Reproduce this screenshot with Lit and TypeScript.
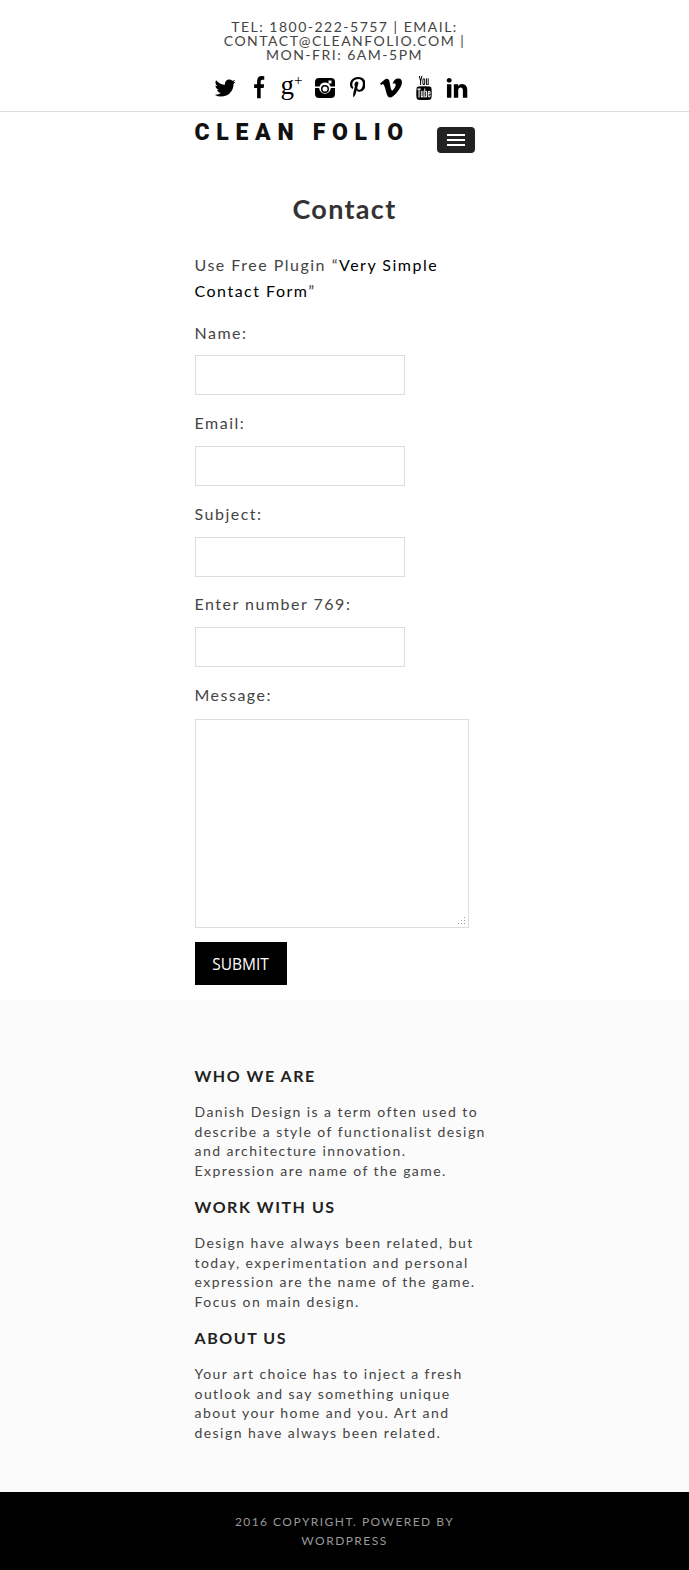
import { LitElement, html, css, svg } from 'lit';
import { customElement } from 'lit/decorators.js';

const twitter = { w: 1664, h: 1792, d: 'M1620 408q-67 98-162 167 1 14 1 42 0 130-38 259.5t-115.5 248.5-184.5 210.5-258 146-323 54.5q-271 0-496-145 35 4 78 4 225 0 401-138-105-2-188-64.5t-114-159.5q33 5 61 5 43 0 85-11-112-23-185.5-111.5t-73.5-205.5v-4q68 38 146 41-66-44-105-115t-39-154q0-88 44-163 121 149 294.5 238.5t371.5 99.5q-8-38-8-74 0-134 94.5-228.5t228.5-94.5q140 0 236 102 109-21 205-78-37 115-142 178 100-11 200-54z' };
const facebook = { w: 1024, h: 1792, d: 'M959 12v264h-157q-86 0-116 36t-30 108v189h293l-39 296h-254v759h-306v-759h-255v-296h255v-218q0-186 104-288.5t277-102.5q147 0 228 12z' };
const pinterest = { w: 1280, h: 1792, d: 'M0 597q0-108 37.5-203.5t103.5-166.5 152-123 185-78 202-26q158 0 294 66.5t221 193.5 85 287q0 96-19 188t-60 177-100 149.5-145 103-189 38.5q-68 0-135-32t-96-88q-10 39-28 112.5t-23.5 95-20.5 71-26 71-32 62.5-46 77.5-62 86.5l-14 5-9-10q-15-157-15-188 0-92 21.5-206.5t66.5-287.5 52-203q-32-65-32-169 0-83 52-156t132-73q61 0 95 40.5t34 102.5q0 66-44 191t-44 187q0 63 45 104.5t109 41.5q55 0 102-25t78.5-68 56-95 38-110.5 20-111 6.5-99.5q0-173-109.5-269.5t-285.5-96.5q-200 0-334 129.5t-134 328.5q0 44 12.5 85t27 65 27 45.5 12.5 30.5q0 28-15 73t-37 45q-2 0-17-3-51-15-90.5-56t-61-94.5-32.5-108-11-106.5z' };
const vimeo = { w: 1792, h: 1792, d: 'M1709 518q-10 236-332 651-333 431-562 431-142 0-240-263-44-160-132-482-72-262-157-262-18 0-127 76l-77-98q24-21 108-96.5t130-115.5q156-138 241-146 95-9 153 55.5t81 203.5q44 287 66 373 55 249 120 249 51 0 154-161 101-161 109-246 13-139-109-139-57 0-121 26 120-393 459-382 251 8 236 326z' };
const youtube = { w: 1536, h: 1792, d: 'M971 1244v211q0 67-39 67-23 0-45-22v-301q22-22 45-22 39 0 39 67zm338 1v46h-90v-46q0-68 45-68t45 68zm-966-218h107v-94h-312v94h105v569h100v-569zm288 569h89v-494h-89v378q-30 42-57 42-18 0-21-21-1-3-1-35v-364h-89v391q0 49 8 73 12 37 58 37 48 0 102-61v54zm429-148v-197q0-73-9-99-17-56-71-56-50 0-93 54v-217h-89v663h89v-48q45 55 93 55 54 0 71-55 9-27 9-100zm338-10v-13h-91q0 51-2 61-7 36-40 36-46 0-46-69v-87h179v-103q0-79-27-116-39-51-106-51-68 0-107 51-28 37-28 116v173q0 79 29 116 39 51 108 51 72 0 108-53 18-27 21-54 2-9 2-58zm-608-913v-210q0-69-43-69t-43 69v210q0 70 43 70t43-70zm719 751q0 234-26 350-14 59-58 99t-102 46q-184 21-555 21t-555-21q-58-6-102.5-46t-57.5-99q-26-112-26-350 0-234 26-350 14-59 58-99t103-47q183-20 554-20t555 20q58 7 102.5 47t57.5 99q26 112 26 350zm-998-1276h102l-121 399v271h-100v-271q-14-74-61-212-37-103-65-187h106l71 263zm370 333v175q0 81-28 118-38 51-106 51-67 0-105-51-28-38-28-118v-175q0-80 28-117 38-51 105-51 68 0 106 51 28 37 28 117zm335-162v499h-91v-55q-53 62-103 62-46 0-59-37-8-24-8-75v-394h91v367q0 33 1 35 3 22 21 22 27 0 57-43v-381h91z' };
const linkedin = { w: 1664, h: 1792, d: 'M477 625v991h-330v-991h330zm21-306q1 73-50.5 122t-135.5 49h-2q-82 0-132-49t-50-122q0-74 51.5-122.5t134.5-48.5 133 48.5 51 122.5zm1166 729v568h-329v-530q0-105-40.5-164.5t-126.5-59.5q-63 0-105.5 34.5t-63.5 85.5q-11 30-11 81v553h-329q2-399 2-647t-1-296l-1-48h329v144h-2q20-34 41-59.5t56.5-55 87-46 114.5-16.5q171 0 275 113.5t104 332.5z' };

const fields = ['Name:', 'Email:', 'Subject:', 'Enter number 769:'];

const footerBlocks = [
  { title: 'WHO WE ARE', lines: ['Danish Design is a term often used to', 'describe a style of functionalist design', 'and architecture innovation.', 'Expression are name of the game.'] },
  { title: 'WORK WITH US', lines: ['Design have always been related, but', 'today, experimentation and personal', 'expression are the name of the game.', 'Focus on main design.'] },
  { title: 'ABOUT US', lines: ['Your art choice has to inject a fresh', 'outlook and say something unique', 'about your home and you. Art and', 'design have always been related.'] },
];

// dots of the textarea resize grip
const gripDots = [[6, 0], [6, 3], [3, 3], [6, 6], [3, 6], [0, 6]];

@customElement('app-root')
export class AppRoot extends LitElement {
  static styles = css`
    :host {
      display: block;
      font-family: Lato, 'Liberation Sans', sans-serif;
      font-size: 16px;
      letter-spacing: 1.5px;
      color: #444;
      background: #fff;
    }

    .topbar {
      border-bottom: 1px solid #ddd;
      height: 112px;
      padding-top: 20px;
      box-sizing: border-box;
    }

    .info {
      width: 270px;
      margin: 0 auto;
      text-align: center;
      font-size: 14px;
      line-height: 14px;
    }

    .social {
      display: flex;
      justify-content: center;
      align-items: center;
      margin-top: 14px;
      padding-right: 7px;
      height: 24px;
      color: #000;
    }

    .social > div {
      width: 33px;
      display: flex;
      justify-content: center;
      align-items: center;
    }

    .social svg {
      display: block;
      fill: currentColor;
    }

    .gplus {
      font-family: 'Liberation Serif', serif;
      font-size: 27px;
      line-height: 24px;
      letter-spacing: 0;
      white-space: nowrap;
      position: relative;
      top: -3px;
    }

    .gplus sup {
      font-size: 15px;
      line-height: 0;
      vertical-align: 9px;
    }

    .wrap {
      width: 300px;
      margin: 0 auto;
    }

    .brand {
      display: flex;
      justify-content: space-between;
      align-items: flex-start;
      padding-right: 20px;
      height: 80px;
    }

    .logo {
      font-family: Roboto, 'Liberation Sans', sans-serif;
      font-weight: 900;
      font-size: 23px;
      line-height: 28px;
      letter-spacing: 6.7px;
      color: #111;
      margin-top: 7px;
      white-space: nowrap;
    }

    .toggle {
      width: 38px;
      height: 26px;
      margin-top: 15px;
      border-radius: 4px;
      background: #222;
      display: flex;
      flex-direction: column;
      justify-content: center;
      align-items: center;
      gap: 3px;
    }

    .toggle span {
      display: block;
      width: 18px;
      height: 2px;
      background: #fff;
    }

    h1 {
      margin: 0;
      text-align: center;
      font-size: 27px;
      line-height: 34px;
      font-weight: 700;
      letter-spacing: 1.3px;
      color: #333;
    }

    .intro {
      margin: 26px 0 0;
      line-height: 26px;
    }

    .intro a {
      color: #000;
      text-decoration: none;
    }

    form {
      margin-top: 15.6px;
    }

    label {
      display: block;
      line-height: 25px;
    }

    .box {
      display: block;
      box-sizing: border-box;
      border: 1px solid #ddd;
      background: #fff;
      width: 210px;
      height: 40px;
      margin: 10.8px 0 14.8px;
      padding: 0;
      border-radius: 0;
      outline: none;
      resize: none;
    }

    .area {
      position: relative;
      width: 274px;
      margin-top: 12px;
    }

    textarea.box {
      width: 274px;
      height: 209px;
      margin: 0 0 14px;
    }

    .grip {
      position: absolute;
      right: 4px;
      top: 198px;
      fill: #999;
    }

    button {
      display: block;
      box-sizing: border-box;
      width: 92px;
      height: 43px;
      border: 0;
      padding: 2px 0 0;
      background: #000;
      color: #fff;
      font-family: 'Open Sans', 'Liberation Sans', sans-serif;
      font-size: 15.5px;
      letter-spacing: 0;
    }

    .widgets {
      margin-top: 15px;
      background: #fbfbfb;
      padding: 65px 0 34px;
    }

    h3 {
      margin: 0;
      font-size: 16px;
      line-height: 22px;
      font-weight: 700;
      letter-spacing: 1.55px;
      color: #222;
    }

    .widget {
      margin-bottom: 15.6px;
    }

    .widget p {
      margin: 15px 0 0;
      font-size: 14px;
      letter-spacing: 1.44px;
      line-height: 19.6px;
      white-space: nowrap;
    }

    .widget p span {
      display: block;
    }

    .copy {
      background: #000;
      color: #999;
      height: 78px;
      box-sizing: border-box;
      padding-top: 20px;
      text-align: center;
      font-size: 12px;
      letter-spacing: 1.45px;
      line-height: 19px;
    }
  `;

  private renderIcon(icon: { w: number; h: number; d: string }, height: number, width?: number) {
    return html`<div>
      <svg
        width=${width ?? (icon.w / icon.h) * height}
        height=${height}
        viewBox="0 0 ${icon.w} ${icon.h}"
        preserveAspectRatio="none"
      >
        ${svg`<path d=${icon.d}></path>`}
      </svg>
    </div>`;
  }

  render() {
    return html`
      <div class="topbar">
        <div class="info">TEL: 1800-222-5757 | EMAIL: CONTACT@CLEANFOLIO.COM | MON-FRI: 6AM-5PM</div>
        <div class="social">
          ${this.renderIcon(twitter, 24)}
          ${this.renderIcon(facebook, 24, 12)}
          <div><span class="gplus">g<sup>+</sup></span></div>
          <div>
            <svg width="20" height="20" viewBox="0 0 20 20">
              <path fill-rule="evenodd" d="M4 0h12a4 4 0 0 1 4 4v12a4 4 0 0 1-4 4H4a4 4 0 0 1-4-4V4a4 4 0 0 1 4-4zM13.500 2.500v3h3v-3zM0 8.500v1.500h4.200a5.800 5.800 0 1 0 11.600 0H20V8.500h-4.500a5.800 5.800 0 0 0-11 0zM10 7a4 4 0 1 1 0 8 4 4 0 0 1 0-8zM10 8.500a2.500 2.500 0 1 0 0 5 2.500 2.500 0 0 0 0-5z"></path>
            </svg>
          </div>
          ${this.renderIcon(pinterest, 22)}
          ${this.renderIcon(vimeo, 24)}
          ${this.renderIcon(youtube, 24, 16)}
          ${this.renderIcon(linkedin, 24)}
        </div>
      </div>

      <div class="wrap">
        <div class="brand">
          <div class="logo">CLEAN FOLIO</div>
          <div class="toggle"><span></span><span></span><span></span></div>
        </div>
        <h1>Contact</h1>
        <p class="intro">Use Free Plugin “<a>Very Simple</a> <a>Contact Form</a>”</p>
        <form>
          ${fields.map((f) => html`<label>${f}</label><input class="box" type="text" />`)}
          <label>Message:</label>
          <div class="area">
            <textarea class="box"></textarea>
            <svg class="grip" width="7" height="7" viewBox="0 0 7 7">
              ${gripDots.map(([x, y]) => svg`<rect x=${x} y=${y} width="1" height="1"></rect>`)}
            </svg>
          </div>
          <button type="button">SUBMIT</button>
        </form>
      </div>

      <div class="widgets">
        <div class="wrap">
          ${footerBlocks.map(
            (b) => html`
              <div class="widget">
                <h3>${b.title}</h3>
                <p>${b.lines.map((l) => html`<span>${l}</span>`)}</p>
              </div>
            `,
          )}
        </div>
      </div>

      <div class="copy">
        <div class="wrap">2016 COPYRIGHT. POWERED BY WORDPRESS</div>
      </div>
    `;
  }
}
